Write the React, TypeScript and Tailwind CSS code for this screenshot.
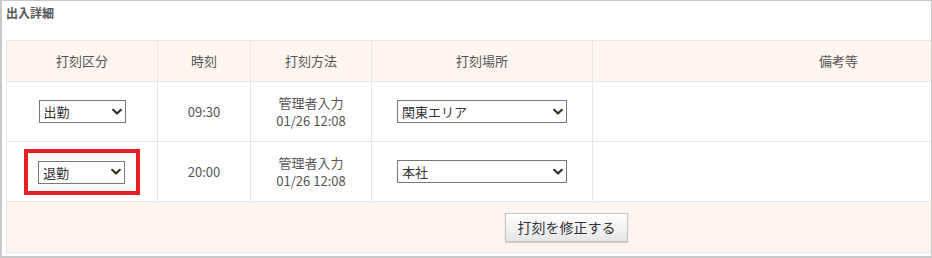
import React from "react";

const font = { fontFamily: '"Noto Sans CJK JP", "Noto Sans", sans-serif' };

function Chevron() {
  return (
    <svg width="10" height="7" viewBox="0 0 10 7" className="pointer-events-none absolute right-[4px] top-1/2 -translate-y-1/2">
      <path d="M1.2 1.2 L5 5 L8.8 1.2" fill="none" stroke="#3b2c1c" strokeWidth="2.2" strokeLinecap="round" strokeLinejoin="round" />
    </svg>
  );
}

function Select({ value, width }: { value: string; width: string }) {
  return (
    <div className={`relative inline-block align-middle ${width}`}>
      <select
        defaultValue={value}
        className="h-[23px] w-full appearance-none border border-[#777777] bg-white pl-[4px] pr-[18px] text-[13px] leading-[21px] text-[#333333] outline-none"
        style={font}
      >
        <option>{value}</option>
      </select>
      <Chevron />
    </div>
  );
}

export default function App() {
  const rows = [
    { kind: "出勤", time: "09:30", place: "関東エリア", red: false },
    { kind: "退勤", time: "20:00", place: "本社", red: true },
  ];
  return (
    <div
      className="h-[258px] w-[932px] overflow-hidden border-b-2 border-l-2 border-r border-t border-[#c8c8c8] bg-white pl-[4px] text-[#555555]"
      style={font}
    >
      <div className="mt-[3px] text-[12px] font-bold leading-[17px] text-[#555555]">出入詳細</div>
      <table className="mt-[19px] w-[1120px] table-fixed border-collapse text-[13px]">
        <colgroup>
          <col className="w-[151px]" />
          <col className="w-[93px]" />
          <col className="w-[121px]" />
          <col className="w-[221px]" />
          <col className="w-[492px]" />
          <col className="w-[42px]" />
        </colgroup>
        <thead>
          <tr className="h-[41px] bg-[#fef5ef]">
            <th className="border border-[#e6e6e6] text-center font-normal">打刻区分</th>
            <th className="border border-[#e6e6e6] text-center font-normal">時刻</th>
            <th className="border border-[#e6e6e6] text-center font-normal">打刻方法</th>
            <th className="border border-[#e6e6e6] text-center font-normal">打刻場所</th>
            <th className="border border-[#e6e6e6] text-center font-normal">備考等</th>
            <th className="border border-[#e6e6e6] font-normal"></th>
          </tr>
        </thead>
        <tbody>
          {rows.map((r) => (
            <tr key={r.kind} className="h-[60px]">
              <td className="border border-[#e6e6e6] text-center">
                {r.red ? (
                  <div className="inline-block border-4 border-[#e61e25] pb-[7px] pl-[10px] pr-[11px] pt-[8px] align-middle leading-none">
                    <Select value={r.kind} width="w-[87px]" />
                  </div>
                ) : (
                  <Select value={r.kind} width="w-[87px]" />
                )}
              </td>
              <td className="border border-[#e6e6e6] text-center">{r.time}</td>
              <td className="border border-[#e6e6e6] text-center leading-[18px]">
                <div>管理者入力</div>
                <div>01/26 12:08</div>
              </td>
              <td className="border border-[#e6e6e6] text-center">
                <Select value={r.place} width="w-[170px]" />
              </td>
              <td className="border border-[#e6e6e6]"></td>
              <td className="border border-[#e6e6e6]"></td>
            </tr>
          ))}
          <tr className="h-[51px] bg-[#fef5ef]">
            <td colSpan={6} className="border border-[#e6e6e6] text-center">
              <button
                className="h-[29px] w-[123px] border border-[#c3c3c3] bg-gradient-to-b from-white to-[#e6e6e6] text-[14px] text-[#333333] shadow-[0_1px_1px_rgba(0,0,0,0.15)]"
                style={font}
              >
                打刻を修正する
              </button>
            </td>
          </tr>
        </tbody>
      </table>
    </div>
  );
}
